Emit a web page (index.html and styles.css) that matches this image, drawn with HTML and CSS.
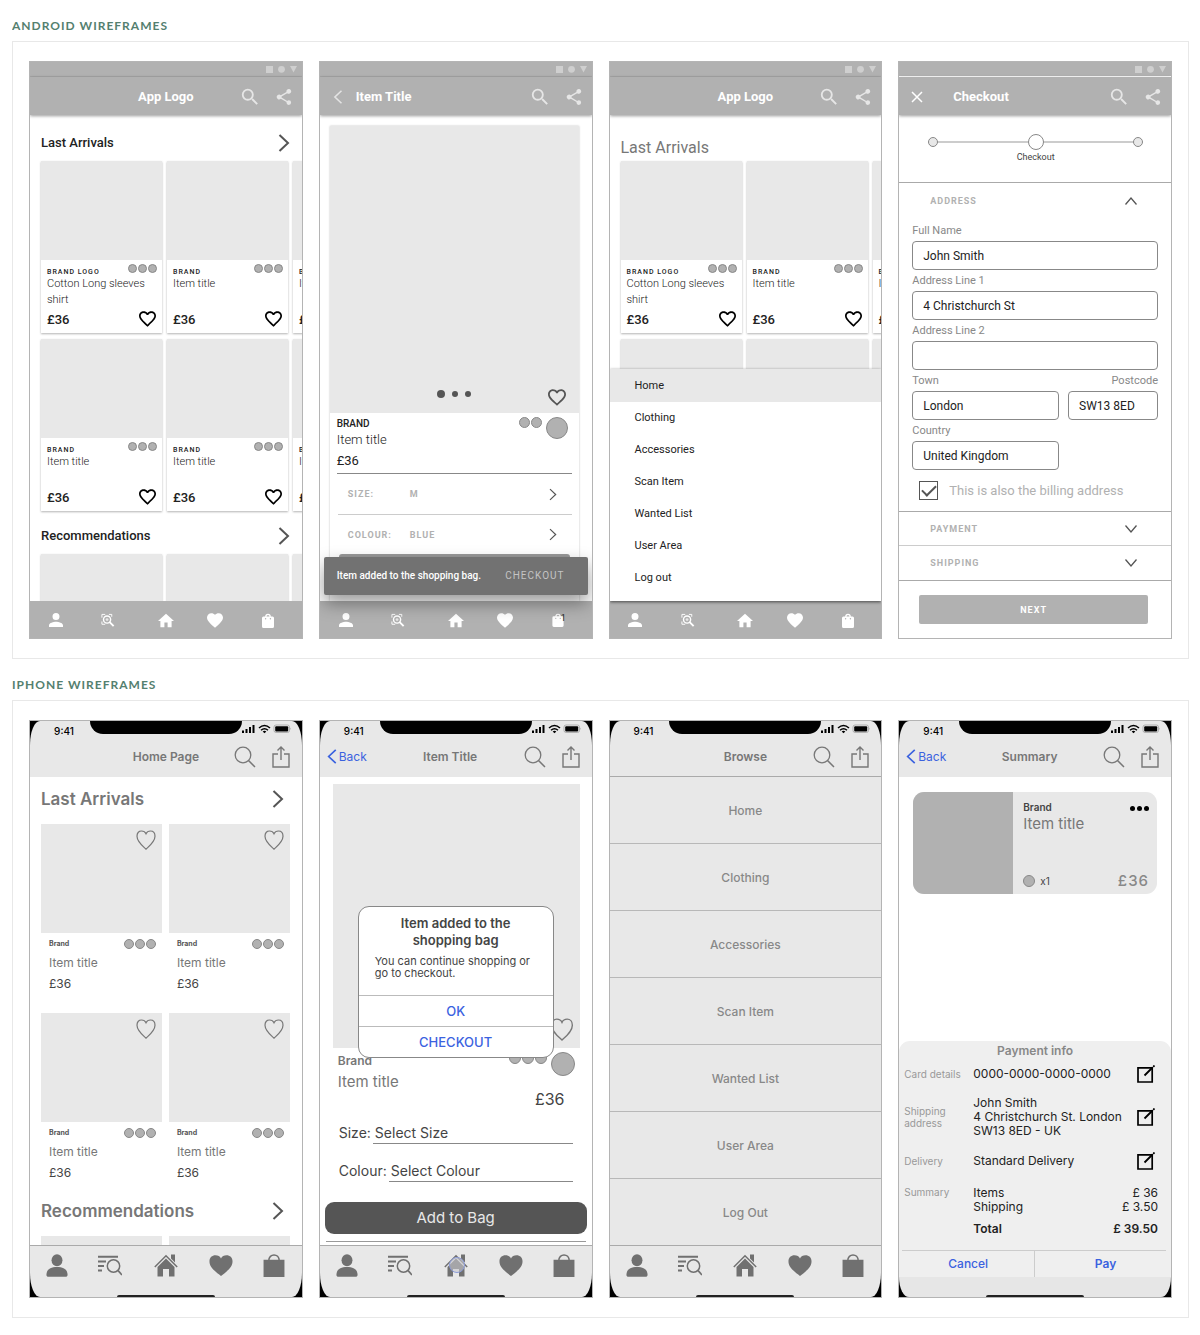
FILE: index.html
```html
<!DOCTYPE html>
<html lang="en">
<head>
<meta charset="utf-8">
<title>Wireframes</title>
<link rel="stylesheet" href="styles.css">
</head>
<body>
<svg class="sprite" aria-hidden="true">
  <symbol id="search" viewBox="1 0 24 24"><path fill="currentColor" d="M15.5 14h-.79l-.28-.27A6.47 6.47 0 0 0 16 9.5 6.5 6.5 0 1 0 9.500 16c1.610 0 3.090-.59 4.230-1.570l.27.28v.79l5 4.990L20.490 19l-4.990-5zm-6 0a4.500 4.500 0 1 1 0-9 4.500 4.500 0 0 1 0 9z"/></symbol>
  <symbol id="share" viewBox="2 2 20 20"><path fill="currentColor" d="M18 16.080c-.76 0-1.440.3-1.960.77L8.910 12.700c.05-.23.09-.46.09-.7s-.04-.47-.09-.7l7.050-4.110A2.990 2.990 0 1 0 15 5c0 .24.04.47.09.7L8.040 9.810a3 3 0 1 0 0 4.380l7.120 4.160c-.05.21-.08.43-.08.65a2.920 2.920 0 1 0 2.920-2.920z"/></symbol>
  <symbol id="right" viewBox="0 0 12 18"><path fill="none" stroke="currentColor" stroke-width="2" d="M1.500 1L10 9l-8.500 8"/></symbol>
  <symbol id="right-thin" viewBox="0 0 12 18"><path fill="none" stroke="currentColor" stroke-width="1.800" d="M1.500 1L10 9l-8.500 8"/></symbol>
  <symbol id="left" viewBox="0 0 12 18"><path fill="none" stroke="currentColor" stroke-width="2" d="M10.500 1L2 9l8.500 8"/></symbol>
  <symbol id="down" viewBox="0 0 14 10"><path fill="none" stroke="currentColor" stroke-width="1.300" d="M1.500 1.500L7 8l5.500-6.500"/></symbol>
  <symbol id="up" viewBox="0 0 14 10"><path fill="none" stroke="currentColor" stroke-width="1.300" d="M1.500 8.500L7 2l5.500 6.500"/></symbol>
  <symbol id="close" viewBox="0 0 12 12"><path fill="none" stroke="currentColor" stroke-width="1.500" d="M1 1l10 10M11 1L1 11"/></symbol>
  <symbol id="heart-line" viewBox="2 3 20 18.400"><path fill="currentColor" d="M16.500 3c-1.740 0-3.410.81-4.500 2.090C10.910 3.810 9.240 3 7.500 3 4.420 3 2 5.420 2 8.500c0 3.780 3.400 6.860 8.550 11.540L12 21.350l1.450-1.320C18.600 15.360 22 12.280 22 8.500 22 5.420 19.580 3 16.500 3zm-4.400 15.550l-.1.1-.1-.1C7.140 14.240 4 11.390 4 8.500 4 6.500 5.500 5 7.500 5c1.540 0 3.040.99 3.570 2.360h1.870C13.460 5.990 14.960 5 16.500 5c2 0 3.500 1.500 3.500 3.500 0 2.890-3.140 5.740-7.900 10.050z"/></symbol>
  <symbol id="heart" viewBox="2 3 20 18.400"><path fill="currentColor" d="M12 21.350l-1.450-1.320C5.400 15.360 2 12.280 2 8.500 2 5.420 4.420 3 7.500 3c1.740 0 3.410.81 4.500 2.090C13.090 3.810 14.760 3 16.500 3 19.580 3 22 5.420 22 8.500c0 3.780-3.400 6.860-8.550 11.540L12 21.350z"/></symbol>
  <symbol id="user" viewBox="4 4 16 16"><path fill="currentColor" d="M12 12a4 4 0 1 0 0-8 4 4 0 0 0 0 8zm0 2c-2.670 0-8 1.340-8 4v2h16v-2c0-2.660-5.330-4-8-4z"/></symbol>
  <symbol id="scan" viewBox="-1 -1 16 16"><path fill="none" stroke="currentColor" d="M.5 4V.5H4M8 .5h3V3M.5 8v3H4"/><circle cx="6" cy="6" r="3.800" fill="none" stroke="currentColor" stroke-width="1.500"/><circle cx="6" cy="6" r="1.500" fill="currentColor" opacity=".7"/><path stroke="currentColor" stroke-width="2" d="M8.500 8.500L13 13"/></symbol>
  <symbol id="home" viewBox="2 3 20 17"><path fill="currentColor" d="M10 20v-6h4v6h5v-8h3L12 3 2 12h3v8z"/></symbol>
  <symbol id="bag" viewBox="0 0 12 15"><path fill="currentColor" d="M1.500 3.500h1.700a2.800 2.800 0 0 1 5.600 0h1.700A1.500 1.500 0 0 1 12 5v8.500a1.500 1.500 0 0 1-1.500 1.500h-9A1.500 1.500 0 0 1 0 13.500V5a1.500 1.500 0 0 1 1.500-1.500zm3 0h3a1.500 1.500 0 0 0-3 0z"/><circle cx="3.600" cy="5.700" r=".7" fill="#b1b1b1"/><circle cx="8.400" cy="5.700" r=".7" fill="#b1b1b1"/></symbol>
  <symbol id="ios-search" viewBox="0 0 22 22"><circle cx="9" cy="9" r="7.800" fill="none" stroke="currentColor" stroke-width="1.300"/><path stroke="currentColor" stroke-width="1.500" d="M14.500 14.500l6.500 6.500"/></symbol>
  <symbol id="ios-share" viewBox="0 0 18 22"><path fill="none" stroke="currentColor" stroke-width="1.400" d="M6 8H1v13h16V8h-5M9 14V1M5.500 4.500L9 1l3.500 3.500"/></symbol>
  <symbol id="ios-heart-line" viewBox="0 0 20 20"><path fill="none" stroke="currentColor" stroke-width="1.200" d="M10 19.200C6 15.500 1 11.500 1 6.200 1 3 3 1 5.500 1 7.500 1 9.200 2 10 3.800 10.800 2 12.500 1 14.500 1 17 1 19 3 19 6.200c0 5.300-5 9.300-9 13z"/></symbol>
  <symbol id="ios-heart" viewBox="0 0 26 23"><path fill="currentColor" d="M13 23C8 18.500.5 14.500.5 7 .5 3 3.300.5 7 .5c2.700 0 5 1.300 6 3.500 1-2.200 3.300-3.500 6-3.500 3.700 0 6.500 2.500 6.500 6.500C25.500 14.500 18 18.500 13 23z"/></symbol>
  <symbol id="ios-user" viewBox="0 0 22 24"><ellipse cx="11" cy="6.500" rx="5.700" ry="6.300" fill="currentColor"/><path fill="currentColor" d="M0 22c0-6 4-8.500 11-8.500S22 16 22 22c0 1.300-.8 1.800-2 1.800H2C.8 23.800 0 23.300 0 22z"/></symbol>
  <symbol id="ios-browse" viewBox="0 0 24 22"><path stroke="currentColor" stroke-width="2" d="M0 2.200h20M0 7h8M0 11.500h6M0 16h4"/><circle cx="15.500" cy="11.500" r="6.200" fill="none" stroke="currentColor" stroke-width="1.500"/><path stroke="currentColor" stroke-width="1.800" d="M20 16l4 4.500"/></symbol>
  <symbol id="ios-home" viewBox="0 0 24 22"><path fill="none" stroke="currentColor" stroke-width="1.500" d="M.8 12.500L12 1.300l11.200 11.200"/><path fill="currentColor" d="M17 0h4v8l-4-4zM3.500 12.500L12 4l8.500 8.500V22h-5.500v-7.500H9V22H3.500z"/></symbol>
  <symbol id="ios-bag" viewBox="0 0 20 22"><path fill="currentColor" d="M0 5.500h20V22H0z"/><path fill="none" stroke="currentColor" stroke-width="1.400" d="M5 6.500C5-1 15-1 15 6.500"/></symbol>
  <symbol id="edit" viewBox="0 0 18 18"><path fill="none" stroke="currentColor" stroke-width="1.700" d="M1 2.800h14.200V17H1z"/><path stroke="currentColor" stroke-width="1.800" d="M7.500 10.500l8-8M16.200 1.800L17.500.5"/></symbol>
  <symbol id="sys" viewBox="0 0 32 8"><path fill="#cfcfcf" d="M0 1h7v7H0zM24 1h7l-3.500 6.500z"/><circle cx="15.500" cy="4.300" r="3.400" fill="#cfcfcf"/></symbol>
  <symbol id="ios-sys" viewBox="0 0 50 10"><path d="M0 6.500h2V9H0zM3.500 5h2v4h-2zM7 3h2v6H7zM10.500 1h2v8h-2z"/><path fill="none" stroke="#000" stroke-width="1.500" d="M17 4q5.500-5 11 0M19 6.300q3.500-3 7 0"/><path d="M20.700 7.500q1.800-1.500 3.600 0L22.500 9.300z"/><rect x="32" y="1" width="15.500" height="7.500" rx="2" fill="none" stroke="#999" stroke-width=".7"/><rect x="33.200" y="2.200" width="13" height="5.200" rx="1"/><path fill="#888" d="M48.500 3.500q1 1.200 0 2.400z"/></symbol>
</svg>

<section class="group">
  <h2 class="group-title">ANDROID WIREFRAMES</h2>
  <div class="board">

    <article class="phone">
      <div class="sysbar"><svg><use href="#sys"/></svg></div>
      <header class="appbar">
        <span></span><h3>App Logo</h3>
        <div class="tools"><svg class="i20"><use href="#search"/></svg><svg class="i16"><use href="#share"/></svg></div>
      </header>
      <div class="feed">
        <div class="feed-head"><h4>Last Arrivals</h4><svg class="chev"><use href="#right"/></svg></div>
        <div class="cards">
          <div class="card"><div class="pic"></div><div class="meta"><b>BRAND LOGO</b><span class="dots"><i></i><i></i><i></i></span></div><p>Cotton Long sleeves shirt</p><div class="buy"><strong>£36</strong><svg><use href="#heart-line"/></svg></div></div>
          <div class="card"><div class="pic"></div><div class="meta"><b>BRAND</b><span class="dots"><i></i><i></i><i></i></span></div><p>Item title</p><div class="buy"><strong>£36</strong><svg><use href="#heart-line"/></svg></div></div>
          <div class="card"><div class="pic"></div><div class="meta"><b>BRAND</b></div><p>Item title</p><div class="buy"><strong>£36</strong></div></div>
        </div>
        <div class="cards">
          <div class="card"><div class="pic"></div><div class="meta"><b>BRAND</b><span class="dots"><i></i><i></i><i></i></span></div><p>Item title</p><div class="buy"><strong>£36</strong><svg><use href="#heart-line"/></svg></div></div>
          <div class="card"><div class="pic"></div><div class="meta"><b>BRAND</b><span class="dots"><i></i><i></i><i></i></span></div><p>Item title</p><div class="buy"><strong>£36</strong><svg><use href="#heart-line"/></svg></div></div>
          <div class="card"><div class="pic"></div><div class="meta"><b>BRAND</b></div><p>Item title</p><div class="buy"><strong>£36</strong></div></div>
        </div>
        <div class="feed-head"><h4>Recommendations</h4><svg class="chev"><use href="#right"/></svg></div>
        <div class="cards">
          <div class="card"><div class="pic"></div></div><div class="card"><div class="pic"></div></div><div class="card"><div class="pic"></div></div>
        </div>
      </div>
      <nav class="navbar"><svg><use href="#user"/></svg><svg><use href="#scan"/></svg><svg><use href="#home"/></svg><svg><use href="#heart"/></svg><svg><use href="#bag"/></svg></nav>
    </article>

    <article class="phone">
      <div class="sysbar"><svg><use href="#sys"/></svg></div>
      <header class="appbar with-back">
        <svg class="back"><use href="#left"/></svg><h3>Item Title</h3>
        <div class="tools"><svg class="i20"><use href="#search"/></svg><svg class="i16"><use href="#share"/></svg></div>
      </header>
      <div class="feed product">
        <div class="product-card">
          <div class="hero"><span></span><span class="pager"><i></i><i></i><i></i></span><svg><use href="#heart-line"/></svg></div>
          <div class="summary">
            <div><b>BRAND</b><p>Item title</p><strong>£36</strong></div>
            <span class="swatches"><i></i><i></i><i class="big"></i></span>
          </div>
          <div class="option"><span>SIZE:</span><span>M</span><svg><use href="#right-thin"/></svg></div>
          <div class="option"><span>COLOUR:</span><span>BLUE</span><svg><use href="#right-thin"/></svg></div>
          <div class="hidden-button"></div>
        </div>
      </div>
      <nav class="navbar"><svg><use href="#user"/></svg><svg><use href="#scan"/></svg><svg><use href="#home"/></svg><svg><use href="#heart"/></svg><span class="bag"><svg><use href="#bag"/></svg><em>1</em></span></nav>
      <div class="snackbar"><span>Item added to the shopping bag.</span><button type="button">CHECKOUT</button></div>
    </article>

    <article class="phone">
      <div class="sysbar"><svg><use href="#sys"/></svg></div>
      <header class="appbar">
        <span></span><h3>App Logo</h3>
        <div class="tools"><svg class="i20"><use href="#search"/></svg><svg class="i16"><use href="#share"/></svg></div>
      </header>
      <div class="feed">
        <div class="feed-head large"><h4>Last Arrivals</h4></div>
        <div class="cards">
          <div class="card"><div class="pic"></div><div class="meta"><b>BRAND LOGO</b><span class="dots"><i></i><i></i><i></i></span></div><p>Cotton Long sleeves shirt</p><div class="buy"><strong>£36</strong><svg><use href="#heart-line"/></svg></div></div>
          <div class="card"><div class="pic"></div><div class="meta"><b>BRAND</b><span class="dots"><i></i><i></i><i></i></span></div><p>Item title</p><div class="buy"><strong>£36</strong><svg><use href="#heart-line"/></svg></div></div>
          <div class="card"><div class="pic"></div><div class="meta"><b>BRAND</b></div><p>Item title</p><div class="buy"><strong>£36</strong></div></div>
        </div>
        <div class="cards">
          <div class="card"><div class="pic"></div></div><div class="card"><div class="pic"></div></div><div class="card"><div class="pic"></div></div>
        </div>
      </div>
      <div class="menu"><a class="current" href="#">Home</a><a href="#">Clothing</a><a href="#">Accessories</a><a href="#">Scan Item</a><a href="#">Wanted List</a><a href="#">User Area</a><a href="#">Log out</a></div>
      <nav class="navbar"><svg><use href="#user"/></svg><svg><use href="#scan"/></svg><svg><use href="#home"/></svg><svg><use href="#heart"/></svg><svg><use href="#bag"/></svg></nav>
    </article>

    <article class="phone">
      <div class="sysbar light-line"><svg><use href="#sys"/></svg></div>
      <header class="appbar with-close">
        <svg class="close"><use href="#close"/></svg><h3>Checkout</h3>
        <div class="tools"><svg class="i20"><use href="#search"/></svg><svg class="i16"><use href="#share"/></svg></div>
      </header>
      <form class="checkout">
        <div class="stepper"><div class="track"><i></i><i class="now"></i><i></i></div><span>Checkout</span></div>
        <div class="fold open"><span>ADDRESS</span><svg><use href="#up"/></svg></div>
        <div class="fields">
          <div class="field wide"><label for="name">Full Name</label><input id="name" type="text" value="John Smith"></div>
          <div class="field wide"><label for="line1">Address Line 1</label><input id="line1" type="text" value="4 Christchurch St"></div>
          <div class="field wide"><label for="line2">Address Line 2</label><input id="line2" type="text"></div>
          <div class="field"><label for="town">Town</label><input id="town" type="text" value="London"></div>
          <div class="field end"><label for="post">Postcode</label><input id="post" type="text" value="SW13 8ED"></div>
          <div class="field"><label for="country">Country</label><input id="country" type="text" value="United Kingdom"></div>
        </div>
        <div class="billing"><input id="billing" type="checkbox" checked><label for="billing">This is also the billing address</label></div>
        <div class="fold"><span>PAYMENT</span><svg><use href="#down"/></svg></div>
        <div class="fold last"><span>SHIPPING</span><svg><use href="#down"/></svg></div>
        <button class="next" type="button">NEXT</button>
      </form>
    </article>
  </div>
</section>

<section class="group">
  <h2 class="group-title">IPHONE WIREFRAMES</h2>
  <div class="board">

    <article class="phone ios">
      <header class="top">
        <div class="clock"><time>9:41</time><i class="notch"></i><svg><use href="#ios-sys"/></svg></div>
        <div class="title-row"><span></span><h3>Home Page</h3><div class="tools"><svg><use href="#ios-search"/></svg><svg class="up"><use href="#ios-share"/></svg></div></div>
      </header>
      <div class="body">
        <div class="list-head"><h4>Last Arrivals</h4><svg><use href="#right"/></svg></div>
        <div class="tiles">
          <div class="tile"><div class="pic"><svg><use href="#ios-heart-line"/></svg></div><div class="meta"><b>Brand</b><span class="dots"><i></i><i></i><i></i></span></div><p>Item title</p><strong>£36</strong></div>
          <div class="tile"><div class="pic"><svg><use href="#ios-heart-line"/></svg></div><div class="meta"><b>Brand</b><span class="dots"><i></i><i></i><i></i></span></div><p>Item title</p><strong>£36</strong></div>
          <div class="tile"><div class="pic"><svg><use href="#ios-heart-line"/></svg></div><div class="meta"><b>Brand</b><span class="dots"><i></i><i></i><i></i></span></div><p>Item title</p><strong>£36</strong></div>
          <div class="tile"><div class="pic"><svg><use href="#ios-heart-line"/></svg></div><div class="meta"><b>Brand</b><span class="dots"><i></i><i></i><i></i></span></div><p>Item title</p><strong>£36</strong></div>
        </div>
        <div class="list-head later"><h4>Recommendations</h4><svg><use href="#right"/></svg></div>
        <div class="tiles"><div class="tile"><div class="pic"></div></div><div class="tile"><div class="pic"></div></div></div>
      </div>
      <nav class="tabs"><div><svg><use href="#ios-user"/></svg><svg><use href="#ios-browse"/></svg><svg><use href="#ios-home"/></svg><svg><use href="#ios-heart"/></svg><svg><use href="#ios-bag"/></svg></div><i class="grip"></i></nav>
    </article>

    <article class="phone ios">
      <header class="top">
        <div class="clock"><time>9:41</time><i class="notch"></i><svg><use href="#ios-sys"/></svg></div>
        <div class="title-row"><a href="#"><svg><use href="#left"/></svg>Back</a><h3>Item Title</h3><div class="tools"><svg><use href="#ios-search"/></svg><svg class="up"><use href="#ios-share"/></svg></div></div>
      </header>
      <div class="body item">
        <div class="photo"><svg><use href="#ios-heart-line"/></svg></div>
        <div class="details">
          <div class="lead"><div><b>Brand</b><p>Item title</p></div><span class="swatches"><i></i><i></i><i></i><i class="big"></i></span></div>
          <strong>£36</strong>
          <div class="pick"><label for="size">Size:</label><select id="size"><option>Select Size</option></select></div>
          <div class="pick"><label for="colour">Colour:</label><select id="colour"><option>Select Colour</option></select></div>
        </div>
        <button class="add" type="button">Add to Bag</button>
        <hr>
      </div>
      <nav class="tabs"><div><svg><use href="#ios-user"/></svg><svg><use href="#ios-browse"/></svg><span class="touched"><svg><use href="#ios-home"/></svg></span><svg><use href="#ios-heart"/></svg><svg><use href="#ios-bag"/></svg></div><i class="grip"></i></nav>
      <div class="dialog" role="dialog"><div class="message"><h4>Item added to the shopping bag</h4><p>You can continue shopping or go to checkout.</p></div><button type="button">OK</button><button type="button">CHECKOUT</button></div>
    </article>

    <article class="phone ios">
      <header class="top ruled">
        <div class="clock"><time>9:41</time><i class="notch"></i><svg><use href="#ios-sys"/></svg></div>
        <div class="title-row"><span></span><h3>Browse</h3><div class="tools"><svg><use href="#ios-search"/></svg><svg class="up"><use href="#ios-share"/></svg></div></div>
      </header>
      <div class="body browse"><a href="#">Home</a><a href="#">Clothing</a><a href="#">Accessories</a><a href="#">Scan Item</a><a href="#">Wanted List</a><a href="#">User Area</a><a href="#">Log Out</a></div>
      <nav class="tabs"><div><svg><use href="#ios-user"/></svg><svg><use href="#ios-browse"/></svg><svg><use href="#ios-home"/></svg><svg><use href="#ios-heart"/></svg><svg><use href="#ios-bag"/></svg></div><i class="grip"></i></nav>
    </article>

    <article class="phone ios">
      <header class="top">
        <div class="clock"><time>9:41</time><i class="notch"></i><svg><use href="#ios-sys"/></svg></div>
        <div class="title-row"><a href="#"><svg><use href="#left"/></svg>Back</a><h3>Summary</h3><div class="tools"><svg><use href="#ios-search"/></svg><svg class="up"><use href="#ios-share"/></svg></div></div>
      </header>
      <div class="body order">
        <div class="order-card">
          <div class="thumb"></div>
          <div class="order-text">
            <div class="spread"><b>Brand</b><span class="more"><i></i><i></i><i></i></span></div>
            <p>Item title</p>
            <div class="spread foot"><span class="qty"><i></i>x1</span><strong>£36</strong></div>
          </div>
        </div>
        <div class="sheet">
          <h4>Payment info</h4>
          <div class="line card-line"><span>Card details</span><p>0000-0000-0000-0000</p><button type="button" aria-label="Edit card"><svg><use href="#edit"/></svg></button></div>
          <div class="line address-line"><span>Shipping address</span><p>John Smith<br>4 Christchurch St. London<br>SW13 8ED - UK</p><button type="button" aria-label="Edit address"><svg><use href="#edit"/></svg></button></div>
          <div class="line"><span>Delivery</span><p>Standard Delivery</p><button type="button" aria-label="Edit delivery"><svg><use href="#edit"/></svg></button></div>
          <div class="sums"><span>Summary</span>
            <table>
              <tr><td>Items</td><td>£ 36</td></tr>
              <tr><td>Shipping</td><td>£ 3.50</td></tr>
              <tr class="total"><td>Total</td><td>£ 39.50</td></tr>
            </table>
          </div>
          <div class="actions"><button type="button">Cancel</button><button class="pay" type="button">Pay</button></div>
        </div>
      </div>
      <div class="foot-bar"><i class="grip"></i></div>
    </article>
  </div>
</section>
</body>
</html>
```
FILE: styles.css
```css
* { box-sizing: border-box; }
body { margin: 0 11px 0 12px; background: #fff; color: #222; font-family: Roboto, "Liberation Sans", sans-serif; }
h2, h3, h4, p { margin: 0; }
i, em { font-style: normal; }
svg { display: block; flex: none; }
button, input, select { font: inherit; color: inherit; }
button { border: 0; padding: 0; background: none; }
a { color: inherit; text-decoration: none; }
.sprite { position: absolute; width: 0; height: 0; }

.group { padding-top: 14px; }
.group-title { font: 700 12px/24px Lato, "Open Sans", sans-serif; letter-spacing: 1px; color: #54806f; margin-bottom: 3px; }
.board { display: grid; grid-template-columns: repeat(4, 1fr); gap: 16px; padding: 19px 16px; border: 1px solid #e8e8e8; }
.phone { position: relative; display: flex; flex-direction: column; aspect-ratio: 9 / 19; overflow: hidden; border: 1px solid #b4b4b4; background: #fff; }

/* Android chrome */
.sysbar { display: flex; justify-content: flex-end; flex: none; height: 15px; padding: 3px 4px; background: #b1b1b1; box-shadow: inset 0 -1px #a8a8a8, 0 -1px #999; }
.sysbar svg { width: 32px; height: 8px; }
.sysbar.light-line { border-bottom: 1px solid #fff; box-shadow: 0 -1px #999; }
.appbar { position: relative; z-index: 1; display: grid; grid-template-columns: 1fr auto 1fr; align-items: center; flex: none; height: 38px; padding: 1px 10px 0 0; background: #b1b1b1; color: #fff; box-shadow: 0 1px 3px rgba(0, 0, 0, .4); }
.appbar h3 { padding-left: 10px; font-size: 13px; line-height: 18px; font-weight: 700; }
.appbar.with-back { grid-template-columns: 26px auto 1fr; padding-left: 10px; }
.appbar.with-back h3 { padding-left: 0; }
.appbar.with-close { grid-template-columns: 32px auto 1fr; padding-left: 12px; }
.appbar .back { width: 16px; height: 14px; color: #e4e4e4; }
.appbar .close { width: 12px; height: 12px; }
.tools { display: flex; justify-content: flex-end; align-items: center; gap: 16px; color: #e6e6e6; }
.i20 { width: 22px; height: 22px; }
.i16 { width: 16px; height: 16px; }
.appbar .tools { gap: 14px; }
.navbar { display: grid; grid-template-columns: 52fr 54fr 62fr 38fr 68fr; place-items: center; flex: none; height: 37px; padding-top: 2px; background: #b1b1b1; color: #fff; }
.navbar svg { width: 16px; height: 15px; }
.navbar svg:first-child { height: 14px; }
.bag { position: relative; }
.bag em { position: absolute; right: 0; top: -1px; font-size: 9px; line-height: 12px; color: #222; }

/* Product feed */
.feed { flex: 1; min-height: 0; overflow: hidden; padding: 9px 0 0 11px; }
.feed-head { display: flex; justify-content: space-between; align-items: center; height: 37px; padding-right: 12px; }
.feed-head h4 { font-size: 13px; font-weight: 500; }
.feed-head.large { align-items: flex-end; padding-bottom: 3px; }
.feed-head.large h4 { font-size: 16px; font-weight: 400; line-height: 20px; color: #777; }
.chev { width: 12px; height: 18px; color: #555; }
.cards { display: flex; gap: 5px; margin-bottom: 6px; }
.card { flex: 0 0 121px; box-shadow: 0 1px 2px rgba(0, 0, 0, .3); }
.card .pic { height: 99px; background: #e8e8e8; }
.card .meta { display: flex; justify-content: space-between; height: 16px; padding: 4px 5px 0 6px; }
.card b { align-self: flex-end; white-space: nowrap; font-size: 7px; line-height: 8px; font-weight: 500; letter-spacing: 1px; }
.dots { display: flex; gap: 1px; }
.dots i { width: 9px; height: 9px; }
.dots i, .swatches i, .qty i { border: 1px solid #888; border-radius: 50%; background: #b1b1b1; }
.card p { height: 32px; padding: 0 6px; font-size: 11px; line-height: 16px; font-weight: 300; }
.buy { display: flex; justify-content: space-between; align-items: center; height: 25px; padding: 0 6px 3px; font-size: 13px; }
.buy strong { font-weight: 500; }
.buy svg { width: 17px; height: 16px; color: #000; }

/* Product page */
.product { padding: 11px 13px 0 10px; }
.product-card { height: 100%; box-shadow: 0 0 2px rgba(0, 0, 0, .25); }
.hero { display: grid; grid-template-columns: 1fr auto 1fr; align-items: center; align-content: end; height: 287px; padding: 0 13px 7px; background: #e8e8e8; color: #555; }
.hero svg { justify-self: end; width: 18px; height: 17px; }
.pager { display: flex; align-items: center; gap: 7px; padding-bottom: 8px; }
.pager i { width: 6px; height: 6px; border-radius: 50%; background: #555; }
.pager i:first-child { width: 8px; height: 8px; }
.summary { display: flex; justify-content: space-between; margin: 0 7px; padding-top: 4px; border-bottom: 1px solid #888; }
.summary b { display: block; font-size: 10px; line-height: 14px; font-weight: 500; }
.summary p { font-size: 13px; line-height: 18px; font-weight: 300; }
.summary strong { display: block; font-size: 13px; line-height: 24px; font-weight: 400; }
.swatches { display: flex; gap: 1px; }
.swatches i { width: 11px; height: 11px; }
.summary .swatches { padding-right: 4px; }
.summary .swatches .big { width: 22px; height: 22px; margin-left: 3px; }
.option { display: grid; grid-template-columns: 62px 1fr auto; align-items: center; height: 40px; margin: 0 7px 0 8px; padding: 0 15px 0 10px; font-size: 9px; font-weight: 700; letter-spacing: 1px; color: #b1b1b1; }
.option + .option { border-top: 1px solid #ccc; }
.option svg { width: 8px; height: 13px; color: #555; }
.hidden-button { height: 30px; margin: 0 9px; border-radius: 3px; background: #999; }
.snackbar { position: absolute; left: 4px; right: 4px; bottom: 43px; display: flex; justify-content: space-between; align-items: center; height: 38px; padding: 0 23px 0 13px; border-radius: 2px; background: #727272; color: #fff; font-size: 10px; font-weight: 500; box-shadow: 0 8px 18px rgba(0, 0, 0, .4); }
.snackbar button { font-weight: 400; letter-spacing: 1px; color: #c4c4c4; }

/* Slide-up menu */
.menu { position: relative; flex: none; display: flex; flex-direction: column; background: #fff; padding-bottom: 7px; font-size: 11px; box-shadow: 0 1px 3px rgba(0, 0, 0, .6); }
.menu a { height: 32px; line-height: 32px; padding-left: 25px; }
.menu .current { height: 33px; line-height: 34px; background: #e8e8e8; }

/* Checkout */
.checkout { display: flex; flex-direction: column; }
.stepper { height: 68px; padding: 19px 28px 0 29px; border-bottom: 1px solid #aaa; text-align: center; }
.track { display: flex; justify-content: space-between; align-items: center; height: 16px; background: linear-gradient(#ccc, #ccc) center / 100% 2px no-repeat; }
.track i { width: 10px; height: 10px; border: 1px solid #888; border-radius: 50%; background: #e8e8e8; }
.track .now { width: 16px; height: 16px; background: #fff; }
.stepper span { display: block; font-size: 9px; line-height: 14px; color: #444; }
.fold { display: flex; justify-content: space-between; align-items: center; height: 34px; padding: 0 33px 0 31px; border-bottom: 1px solid #ccc; font-size: 9px; font-weight: 700; letter-spacing: 1px; color: #b1b1b1; }
.fold.open { height: 36px; border: 0; }
.fold.last { height: 35px; border-color: #aaa; }
.fold svg { width: 14px; height: 10px; color: #555; }
.fields { display: grid; grid-template-columns: 147fr 90fr; column-gap: 9px; padding: 1px 13px 0; }
.field { display: flex; flex-direction: column; font-size: 11px; color: #888; }
.wide { grid-column: 1 / -1; }
.field label { line-height: 21px; }
.field.end label { text-align: right; }
.field input { width: 100%; height: 29px; padding: 0 10px; border: 1px solid #888; border-radius: 4px; background: #fff; color: #222; font-size: 12px; }
.billing { display: flex; align-items: center; gap: 11px; height: 42px; padding-left: 20px; border-bottom: 1px solid #aaa; font-size: 13px; color: #b1b1b1; }
.billing input { appearance: none; display: grid; place-items: center; width: 19px; height: 19px; margin: 0; border: 1px solid #555; }
.billing input:checked::before { content: ""; width: 12px; height: 6px; border: solid #555; border-width: 0 0 2px 2px; transform: rotate(-45deg); margin-bottom: 4px; }
.next { height: 29px; margin: 14px 23px 0 20px; border-radius: 2px; background: #b1b1b1; color: #fff; font-size: 9px; font-weight: 700; letter-spacing: 1px; }

/* iPhone chrome */
.ios { background: #000; font-family: Inter, "Liberation Sans", sans-serif; color: #444; }
.top { flex: none; height: 56px; background: #e8e8e8; border-radius: 10px 10px 0 0 / 24px 24px 0 0; }
.clock { display: grid; grid-template-columns: 1fr 152px 1fr; height: 20px; color: #000; }
.clock time { justify-self: end; padding-right: 16px; font-size: 10px; font-weight: 500; line-height: 20px; }
.clock svg { width: 50px; height: 10px; margin-top: 3px; }
.notch { height: 13px; border-radius: 0 0 14px 14px; background: #000; }
.title-row { display: grid; grid-template-columns: 1fr auto 1fr; align-items: center; height: 32px; padding: 0 12px 0 7px; }
.title-row h3 { padding-left: 5px; font-size: 12px; font-weight: 600; color: #777; }
.title-row a + h3 { padding: 0 6px 0 0; }
.title-row a { display: flex; align-items: center; gap: 2px; font-size: 12px; color: #3b62df; }
.title-row a svg { width: 10px; height: 15px; }
.title-row .tools { color: #777; }
.title-row .tools svg { width: 22px; height: 22px; }
.title-row .tools .up { width: 18px; }
.body { flex: 1; min-height: 0; overflow: hidden; background: #fff; }
.tabs { flex: none; border-top: 1px solid #aaa; background: #e8e8e8; border-radius: 0 0 10px 10px / 0 0 24px 24px; }
.tabs > div { display: grid; grid-template-columns: 55fr 51fr 60fr 50fr 56fr; place-items: center; height: 40px; color: #707070; }
.tabs svg { width: 24px; height: 23px; }
.grip { display: block; width: 98px; height: 2px; margin: 9px auto 0; border-radius: 2px 2px 0 0; background: #222; }
.touched { position: relative; }
.touched::after { content: ""; position: absolute; left: 5px; top: 3px; width: 14px; height: 14px; border: 1px solid #8b9bd8; border-radius: 50%; background: rgba(200, 200, 205, .6); }

/* iPhone home */
.list-head { display: flex; justify-content: space-between; align-items: center; height: 47px; padding: 0 18px 3px 11px; }
.list-head.later { margin-top: 4px; }
.list-head h4 { font-size: 17px; font-weight: 600; color: #777; }
.list-head svg { width: 12px; height: 18px; color: #555; }
.tiles { display: grid; grid-template-columns: 1fr 1fr; gap: 17px 7px; padding: 0 12px 0 11px; }
.tile .pic { display: flex; justify-content: flex-end; height: 109px; padding: 6px; background: #e8e8e8; color: #777; }
.tile .pic svg { width: 20px; height: 20px; }
.tile .meta { display: flex; justify-content: space-between; align-items: center; height: 22px; padding: 0 6px 0 8px; }
.tile b { font-size: 7px; line-height: 8px; font-weight: 700; color: #555; }
.tile .dots i { width: 10px; height: 10px; }
.tile p { padding-left: 8px; font-size: 12px; line-height: 16px; color: #777; }
.tile strong { display: block; padding-left: 8px; font-size: 12px; line-height: 25px; font-weight: 400; }

/* iPhone item */
.item { display: flex; flex-direction: column; padding-top: 7px; }
.photo { display: flex; justify-content: flex-end; align-items: flex-end; height: 264px; margin: 0 12px 0 13px; padding: 7px 6px; background: #e8e8e8; color: #777; }
.photo svg { width: 24px; height: 23px; }
.details { padding: 4px 19px 0 18px; }
.lead { display: flex; justify-content: space-between; height: 40px; }
.lead b { display: block; font-size: 12px; line-height: 18px; font-weight: 600; color: #777; }
.lead p { font-size: 15px; line-height: 24px; color: #777; }
.lead .swatches { margin-right: -2px; }
.lead .swatches i { width: 12px; height: 12px; }
.lead .swatches .big { width: 24px; height: 24px; margin-left: 3px; }
.details strong { display: block; padding-right: 8px; text-align: right; font-size: 16px; line-height: 14px; font-weight: 400; }
.pick { display: flex; gap: 2px; height: 20px; margin-top: 18px; padding-left: 1px; font-size: 14px; line-height: 17px; }
.pick select { flex: 1; appearance: none; height: 20px; padding: 0 0 2px 2px; border: 0; border-bottom: 1px solid #888; border-radius: 0; background: none; }
.add { flex: none; height: 32px; margin: 20px 5px 0; border-radius: 9px; background: #555; color: #e8e8e8; font-size: 15px; }
.item hr { width: 260px; margin: 7px auto 0; border: 0; border-top: 1px solid #999; }
.dialog { position: absolute; top: 185px; left: 38px; right: 38px; display: flex; flex-direction: column; border: 1px solid #888; border-radius: 11px; background: #fff; }
.message { padding: 8px 16px 16px; }
.message h4 { padding: 0 16px; text-align: center; font-size: 13px; line-height: 17px; font-weight: 600; }
.message p { margin-top: 6px; font-size: 11px; line-height: 12px; }
.dialog button { height: 31px; border-top: 1px solid #bbb; color: #3b62df; font-size: 13px; font-weight: 500; }

/* iPhone browse */
.top.ruled { border-bottom: 1px solid #aaa; }
.browse { display: flex; flex-direction: column; background: #e8e8e8; color: #888; font-size: 12px; font-weight: 500; }
.browse a { flex: 1; display: grid; place-items: center; padding-top: 1px; }
.browse a + a { border-top: 1px solid #b8b8b8; }

/* iPhone summary */
.order { display: flex; flex-direction: column; padding-top: 15px; }
.order-card { display: flex; height: 102px; margin: 0 14px; border-radius: 11px; overflow: hidden; background: #e8e8e8; }
.thumb { flex: 0 0 100px; background: #b1b1b1; }
.order-text { flex: 1; display: flex; flex-direction: column; padding: 7px 8px 4px 10px; color: #777; }
.spread { display: flex; justify-content: space-between; align-items: center; }
.order-text b { font-size: 10px; line-height: 16px; font-weight: 600; color: #444; }
.order-text p { font-size: 15px; line-height: 18px; }
.more { display: flex; gap: 2px; padding-top: 4px; }
.more i { width: 5px; height: 5px; border-radius: 50%; background: #000; }
.foot { margin-top: auto; }
.foot strong { font-size: 15px; line-height: 18px; font-weight: 500; letter-spacing: 1px; color: #888; }
.qty { display: flex; align-items: center; gap: 5px; font-size: 10px; color: #444; }
.qty i { width: 12px; height: 12px; }
.sheet { margin-top: auto; border-radius: 11px 11px 0 0; background: #efefef; color: #222; font-size: 12px; line-height: 14px; }
.sheet h4 { font-size: 12px; line-height: 20px; font-weight: 600; text-align: center; color: #888; }
.line { display: grid; grid-template-columns: 69px 1fr 18px; align-items: center; height: 28px; padding: 0 16px 0 5px; }
.line span, .sums span { font-size: 10px; line-height: 12px; color: #999; }
.line p { white-space: nowrap; }
.line svg { width: 18px; height: 18px; color: #000; }
.card-line { height: 26px; }
.address-line { height: 60px; }
.sums { display: grid; grid-template-columns: 69px 1fr; padding: 11px 13px 14px 5px; }
.sums table { width: 100%; border-collapse: collapse; }
.sums td { padding: 0; }
.sums td + td { text-align: right; }
.total td { padding-top: 8px; font-weight: 600; }
.actions { display: grid; grid-template-columns: 1fr 1fr; margin: 0 5px 0 3px; border-top: 1px solid #ccc; }
.actions button { height: 26px; color: #3b62df; font-size: 12px; font-weight: 500; }
.actions .pay { padding-left: 10px; border-left: 1px solid #ccc; font-weight: 600; }
.foot-bar { flex: none; display: flex; align-items: flex-end; height: 20px; background: #e6e6e6; border-radius: 0 0 10px 10px / 0 0 20px 20px; }
```
